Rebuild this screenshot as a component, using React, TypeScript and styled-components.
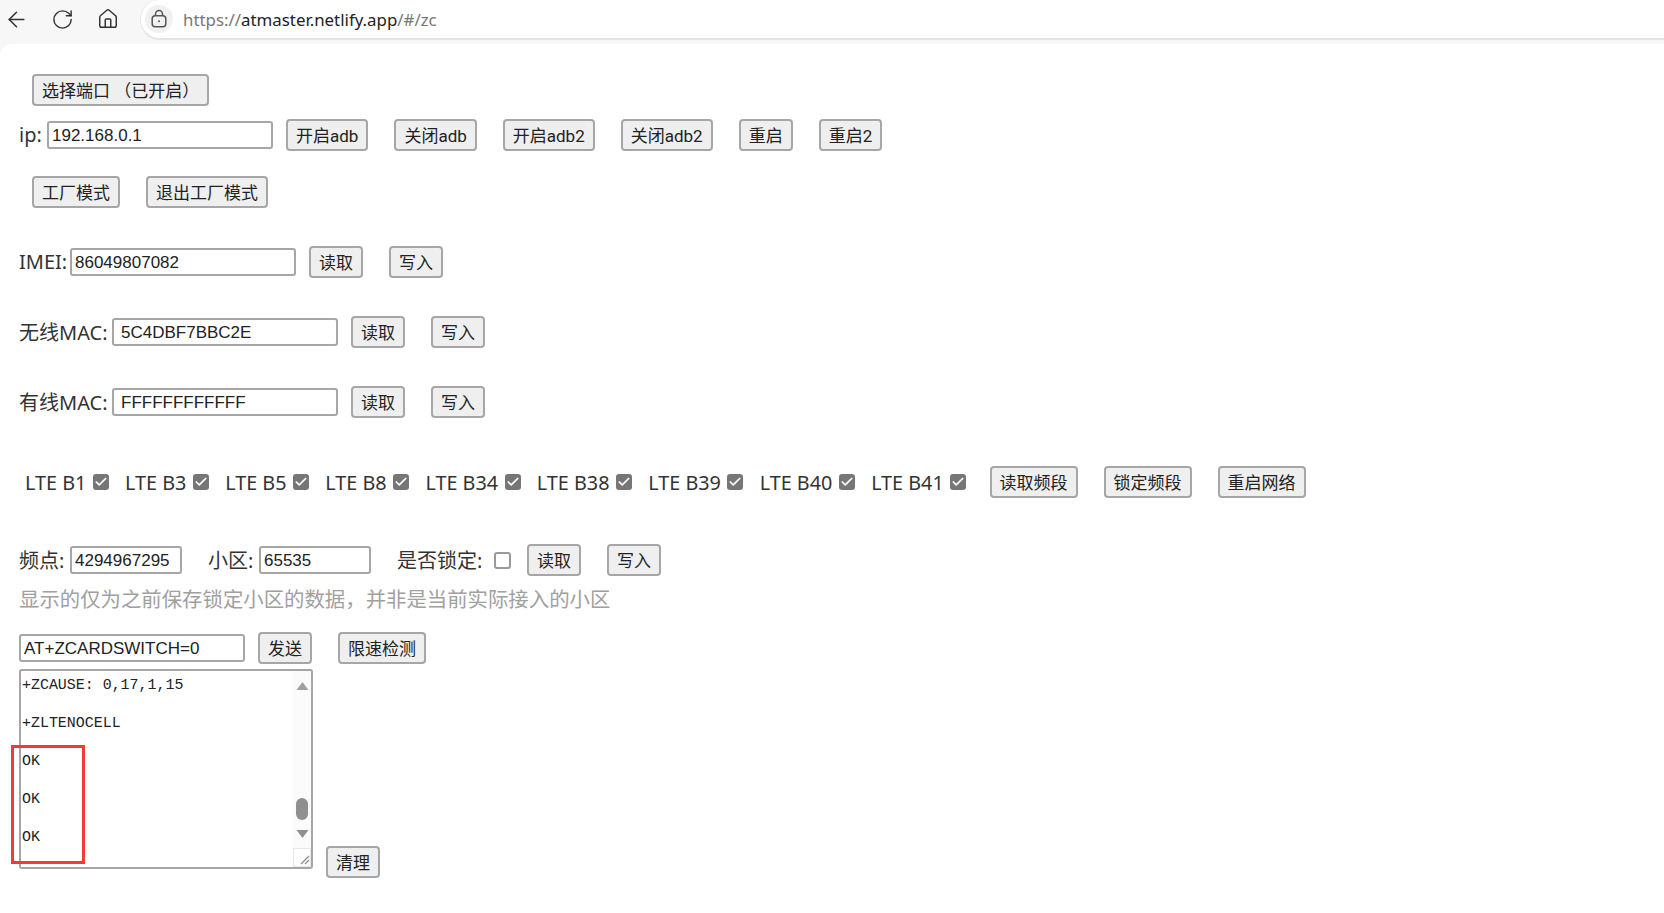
import React from 'react';
import styled, { createGlobalStyle } from 'styled-components';
import { ArrowLeft, RotateCw, Home, Check } from 'lucide-react';

const Global = createGlobalStyle`
  html, body { margin: 0; padding: 0; background: #f7f7f7; }
  body { font-family: "Noto Sans", "Noto Sans CJK SC", sans-serif; color: #222; overflow: hidden; }
`;

const Shell = styled.div`
  width: 1664px;
  height: 913px;
  display: flex;
  flex-direction: column;
`;

const Toolbar = styled.header`
  height: 44px;
  flex: none;
  display: flex;
  align-items: flex-start;
  background: #f7f7f7;
`;

const NavButton = styled.button`
  width: 32px;
  height: 38px;
  margin-right: 14px;
  padding: 0;
  border: 0;
  background: none;
  color: #333;
  display: flex;
  align-items: center;
  justify-content: center;
`;

const AddressBar = styled.div`
  flex: 1;
  height: 40px;
  margin-left: 2px;
  box-sizing: border-box;
  display: flex;
  align-items: center;
  gap: 10px;
  padding-left: 4px;
  background: #fff;
  border-bottom: 2px solid #e4e4e4;
  border-left: 1px solid #e8e8e8;
  border-radius: 20px 0 0 20px;
`;

const LockChip = styled.span`
  width: 28px;
  height: 28px;
  border-radius: 50%;
  background: #f1f1f1;
  color: #555;
  display: flex;
  align-items: center;
  justify-content: center;
`;

const Url = styled.span`
  font-size: 16.85px;
  font-family: "Noto Sans", sans-serif;
  color: #777;
`;

const Host = styled.span`
  color: #222;
`;

const Page = styled.main`
  flex: 1;
  background: #fff;
  border-top-left-radius: 12px;
  padding: 30px 0 0 19px;
`;

const Row = styled.div<{ $top?: number }>`
  display: flex;
  align-items: center;
  height: 32px;
  margin-top: ${(p) => p.$top ?? 0}px;
`;

const Btn = styled.button`
  height: 32px;
  margin: 0 13px;
  padding: 0 8px 2px;
  box-sizing: border-box;
  flex: none;
  font: 17px Roboto, "Noto Sans CJK SC", sans-serif;
  color: #222;
  background: #efefef;
  border: 2px solid #a6a6a6;
  border-radius: 4px;
  white-space: pre;
`;

const OffsetBtn = styled(Btn)`
  margin-bottom: -9px;
`;

const Label = styled.span<{ $w?: number }>`
  font-size: 20px;
  padding-bottom: 2px;
  flex: none;
  width: ${(p) => (p.$w ? `${p.$w}px` : 'auto')};
  white-space: nowrap;
  color: #333;
`;

const Field = styled.input<{ $w?: number; $pad?: number }>`
  width: ${(p) => p.$w ?? 226}px;
  height: 28px;
  box-sizing: border-box;
  padding: 2px 0 0 ${(p) => p.$pad ?? 3}px;
  font: 17px "Liberation Sans", sans-serif;
  color: #222;
  background: #fff;
  border: 2px solid #a6a6a6;
  border-radius: 3px;
  outline: none;
  flex: none;
`;

const Spacer = styled.span<{ $w: number }>`
  width: ${(p) => p.$w}px;
  flex: none;
`;

const BandItem = styled.label`
  display: flex;
  align-items: center;
  margin-left: 6px;
  margin-right: 10.3px;
  font-size: 19.8px;
  color: #333;
  white-space: nowrap;
`;

const Tick = styled.span<{ $on?: boolean }>`
  width: ${(p) => (p.$on ? 16 : 17)}px;
  height: ${(p) => (p.$on ? 16 : 17)}px;
  margin-left: ${(p) => (p.$on ? 6.5 : 7)}px;
  box-sizing: border-box;
  flex: none;
  border-radius: 3px;
  border: ${(p) => (p.$on ? '0' : '2px solid #9a9a9a')};
  background: ${(p) => (p.$on ? '#767676' : '#fff')};
  color: #fff;
  display: flex;
  align-items: center;
  justify-content: center;
`;

const Hint = styled.div`
  margin-top: 8px;
  height: 30px;
  line-height: 30px;
  font-size: 20.4px;
  color: #a0a0a0;
`;

const LogRow = styled.div`
  display: flex;
  align-items: flex-end;
  margin-top: 5px;
`;

const LogWrap = styled.div`
  position: relative;
  width: 294px;
  height: 200px;
  box-sizing: border-box;
  display: flex;
  border: 2px solid #a6a6a6;
  border-radius: 3px;
  background: #fff;
  flex: none;
`;

const LogText = styled.div`
  flex: 1;
  padding: 4px 0 0 1px;
  font: 14.95px "Liberation Mono", monospace;
  color: #222;
`;

const LogLine = styled.div`
  height: 20px;
  line-height: 20px;
  margin-bottom: 18px;
`;

const Rail = styled.div`
  width: 18px;
  flex: none;
  display: flex;
  flex-direction: column;
  align-items: center;
  background: #fbfbfb;
`;

const Arrow = styled.svg<{ $top: number }>`
  width: 13px;
  height: 10px;
  margin-top: ${(p) => p.$top}px;
  display: block;
  flex: none;
`;

const Thumb = styled.div`
  width: 12px;
  height: 22px;
  margin-top: 107px;
  border-radius: 6px;
  background: #8f8f8f;
  flex: none;
`;

const Corner = styled.div`
  width: 18px;
  height: 19px;
  margin-top: auto;
  box-sizing: border-box;
  border: 1px solid #e6e6e6;
  background: #fff;
  flex: none;
`;

const Callout = styled.div`
  position: absolute;
  left: -10px;
  top: 74px;
  width: 74px;
  height: 119px;
  box-sizing: border-box;
  border: 3px solid #f23a3a;
  pointer-events: none;
`;

const bands = ['B1', 'B3', 'B5', 'B8', 'B34', 'B38', 'B39', 'B40', 'B41'];
const log = ['+ZCAUSE: 0,17,1,15', '+ZLTENOCELL', 'OK', 'OK', 'OK'];

const ReadWrite = () => (
  <>
    <Btn>读取</Btn>
    <Btn>写入</Btn>
  </>
);

const LockIcon = () => (
  <svg width="20" height="20" viewBox="0 0 20 20" fill="none" stroke="currentColor" strokeWidth="1.5">
    <rect x="3.2" y="6.8" width="13.6" height="11" rx="3" />
    <path d="M6.5 6.8V5a3.5 3.5 0 0 1 7 0v1.8" />
    <circle cx="10" cy="12.3" r="1" fill="currentColor" stroke="none" />
  </svg>
);

export default function App() {
  return (
    <Shell>
      <Global />
      <Toolbar>
        <NavButton><ArrowLeft size={25} strokeWidth={1.5} /></NavButton>
        <NavButton><RotateCw size={23} strokeWidth={1.5} /></NavButton>
        <NavButton><Home size={22} strokeWidth={1.6} /></NavButton>
        <AddressBar>
          <LockChip><LockIcon /></LockChip>
          <Url>https://<Host>atmaster.netlify.app</Host>/#/zc</Url>
        </AddressBar>
      </Toolbar>
      <Page>
        <Row><Btn>选择端口 （已开启）</Btn></Row>
        <Row $top={13}>
          <Label $w={28}>ip:</Label>
          <Field defaultValue="192.168.0.1" />
          <Btn>开启adb</Btn>
          <Btn>关闭adb</Btn>
          <Btn>开启adb2</Btn>
          <Btn>关闭adb2</Btn>
          <Btn>重启</Btn>
          <Btn>重启2</Btn>
        </Row>
        <Row $top={25}>
          <Btn>工厂模式</Btn>
          <Btn>退出工厂模式</Btn>
        </Row>
        <Row $top={38}>
          <Label $w={51}>IMEI:</Label>
          <Field defaultValue="86049807082" />
          <ReadWrite />
        </Row>
        <Row $top={38}>
          <Label $w={93}>无线MAC:</Label>
          <Field $pad={7} defaultValue="5C4DBF7BBC2E" />
          <ReadWrite />
        </Row>
        <Row $top={38}>
          <Label $w={93}>有线MAC:</Label>
          <Field $pad={7} defaultValue="FFFFFFFFFFFF" />
          <ReadWrite />
        </Row>
        <Row $top={48}>
          {bands.map((b) => (
            <BandItem key={b}>
              LTE {b}
              <Tick $on><Check size={14} strokeWidth={3} /></Tick>
            </BandItem>
          ))}
          <Btn>读取频段</Btn>
          <Btn>锁定频段</Btn>
          <Btn>重启网络</Btn>
        </Row>
        <Row $top={46}>
          <Label $w={51}>频点:</Label>
          <Field $w={112} defaultValue="4294967295" />
          <Spacer $w={26} />
          <Label $w={51}>小区:</Label>
          <Field $w={112} defaultValue="65535" />
          <Spacer $w={26} />
          <Label $w={90}>是否锁定:</Label>
          <Tick />
          <Spacer $w={3} />
          <ReadWrite />
        </Row>
        <Hint>显示的仅为之前保存锁定小区的数据，并非是当前实际接入的小区</Hint>
        <Row $top={18}>
          <Field defaultValue="AT+ZCARDSWITCH=0" />
          <Btn>发送</Btn>
          <Btn>限速检测</Btn>
        </Row>
        <LogRow>
          <LogWrap>
            <LogText>
              {log.map((l, i) => <LogLine key={i}>{l}</LogLine>)}
            </LogText>
            <Rail>
              <Arrow $top={10} viewBox="0 0 13 10"><path d="M6.5 1L12.5 9H.5z" fill="#a0a0a0" /></Arrow>
              <Thumb />
              <Arrow $top={9} viewBox="0 0 13 10"><path d="M.5 1h12L6.5 9z" fill="#8f8f8f" /></Arrow>
              <Corner>
                <svg width="16" height="17" viewBox="0 0 16 17"><path d="M7 15L15 7M11 15l4-4" stroke="#8a8a8a" strokeWidth="1.2" fill="none" /></svg>
              </Corner>
            </Rail>
            <Callout />
          </LogWrap>
          <OffsetBtn>清理</OffsetBtn>
        </LogRow>
      </Page>
    </Shell>
  );
}
